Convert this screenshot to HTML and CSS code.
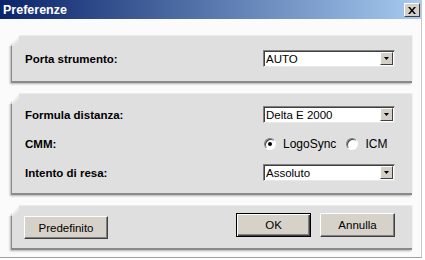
FILE: index.html
```html
<!DOCTYPE html>
<html>
<head>
<meta charset="utf-8">
<link rel="stylesheet" href="styles.css">
</head>
<body>
<div class="window">
  <div class="titlebar">
    <span class="title">Preferenze</span>
    <span class="close"><svg width="8" height="7" viewBox="0 0 8 7"><path d="M0 0h2l2 2.5L6 0h2L5 3.5 8 7H6L4 4.5 2 7H0l3-3.5z" fill="#000"/></svg></span>
  </div>
  <div class="content">
    <div class="panel p1">
      <div class="row">
        <span class="label">Porta strumento:</span>
        <div class="select"><span class="val">AUTO</span><span class="arrow"><svg width="5" height="3" viewBox="0 0 5 3"><path d="M0 0h5L2.5 3z" fill="#000"/></svg></span></div>
      </div>
    </div>
    <div class="panel p2">
      <div class="row">
        <span class="label">Formula distanza:</span>
        <div class="select"><span class="val">Delta E 2000</span><span class="arrow"><svg width="5" height="3" viewBox="0 0 5 3"><path d="M0 0h5L2.5 3z" fill="#000"/></svg></span></div>
      </div>
      <div class="row">
        <span class="label">CMM:</span>
        <div class="radios">
          <span class="radio on"></span><span class="rlabel">LogoSync</span>
          <span class="radio"></span><span class="rlabel">ICM</span>
        </div>
      </div>
      <div class="row">
        <span class="label">Intento di resa:</span>
        <div class="select"><span class="val">Assoluto</span><span class="arrow"><svg width="5" height="3" viewBox="0 0 5 3"><path d="M0 0h5L2.5 3z" fill="#000"/></svg></span></div>
      </div>
    </div>
    <div class="panel p3">
      <button class="btn def-btn">Predefinito</button>
      <div class="right-btns">
        <button class="btn ok">OK</button>
        <button class="btn">Annulla</button>
      </div>
    </div>
  </div>
</div>
</body>
</html>
```
FILE: styles.css
```css
html, body {
  margin: 0;
  padding: 0;
  background: #fff;
}
body {
  width: 425px;
  height: 260px;
  overflow: hidden;
  font-family: "Liberation Sans", Arial, sans-serif;
}
.window {
  width: 422px;
  height: 258px;
  border-right: 1px solid #c8c8c8;
  border-bottom: 1px solid #a0a0a0;
  background: #fbfbfb;
  box-sizing: border-box;
}
.titlebar {
  height: 19px;
  background: linear-gradient(to right, #0a246a, #a6caf0);
  display: flex;
  align-items: center;
  justify-content: space-between;
  padding: 0 1px 0 3px;
}
.title {
  color: #fff;
  font-weight: bold;
  font-size: 12.5px;
}
.close {
  width: 16px;
  height: 14px;
  box-sizing: border-box;
  background: #d4d0c8;
  border: 1px solid;
  border-color: #fff #404040 #404040 #fff;
  display: flex;
  align-items: center;
  justify-content: center;
  margin-top: 1px;
}
.content {
  padding: 16px 8px 0 12px;
  display: flex;
  flex-direction: column;
  gap: 12px;
}
.panel {
  position: relative;
  background: #dfdfdf;
  border-top: 1px solid #ececec;
  border-right: 1px solid #f2f2f2;
  box-shadow: -1px 2px 0 #8a8a8a, -2px 3px 2px rgba(0, 0, 0, 0.3);
  box-sizing: border-box;
}
.panel::before {
  content: "";
  position: absolute;
  left: -4px;
  top: -1px;
  width: 11px;
  height: 11px;
  background: linear-gradient(135deg, #fbfbfb 50%, rgba(251,251,251,0) 80%);
}
.p1 {
  height: 46px;
  padding: 14px 17px 0 13px;
}
.p2 {
  height: 100px;
  padding: 12px 17px 0 13px;
  display: flex;
  flex-direction: column;
  gap: 12px;
}
.p3 {
  height: 43px;
  padding: 7px 17px 0 12px;
  display: flex;
  justify-content: space-between;
  align-items: flex-start;
}
.row {
  display: grid;
  grid-template-columns: 1fr 132px;
  align-items: center;
  height: 17px;
}
.label {
  font-weight: bold;
  font-size: 11.5px;
  color: #000;
}
.select {
  height: 17px;
  box-sizing: border-box;
  background: #fff;
  border: 1px solid;
  border-color: #808080 #e8e8e8 #e8e8e8 #808080;
  box-shadow: inset 1px 1px 0 #404040;
  display: flex;
  align-items: center;
  justify-content: space-between;
  padding: 0 1px 0 2px;
}
.val {
  font-size: 11.5px;
  color: #000;
}
.arrow {
  width: 13px;
  height: 13px;
  box-sizing: border-box;
  background: #d4d0c8;
  border: 1px solid;
  border-color: #fff #404040 #404040 #fff;
  display: flex;
  align-items: center;
  justify-content: center;
}
.radios {
  display: flex;
  align-items: center;
  padding-left: 1px;
}
.radio {
  width: 12px;
  height: 12px;
  box-sizing: border-box;
  border-radius: 50%;
  background: #fff;
  border: 1px solid;
  border-color: #808080 #ffffff #ffffff #808080;
  box-shadow: inset 1px 1px 0 #404040;
  position: relative;
  flex: none;
}
.radio.on::after {
  content: "";
  position: absolute;
  left: 3px;
  top: 3px;
  width: 4px;
  height: 4px;
  border-radius: 50%;
  background: #000;
}
.rlabel {
  font-size: 12px;
  margin-left: 7px;
  margin-right: 10px;
}
.btn {
  font-family: "Liberation Sans", Arial, sans-serif;
  font-size: 11.5px;
  color: #000;
  background: #d6d2ca;
  border: 1px solid;
  border-color: #fff #404040 #404040 #fff;
  box-shadow: inset -1px -1px 0 #808080;
  height: 23px;
  padding: 0;
  margin: 0;
}
.def-btn {
  width: 84px;
  margin-top: 3px;
}
.right-btns {
  display: flex;
  gap: 9px;
}
.right-btns .btn {
  width: 75px;
  height: 24px;
}
.btn.ok {
  border: 1px solid #000;
  box-shadow: inset 1px 1px 0 #fff, inset -1px -1px 0 #404040, inset -2px -2px 0 #808080;
}
```
